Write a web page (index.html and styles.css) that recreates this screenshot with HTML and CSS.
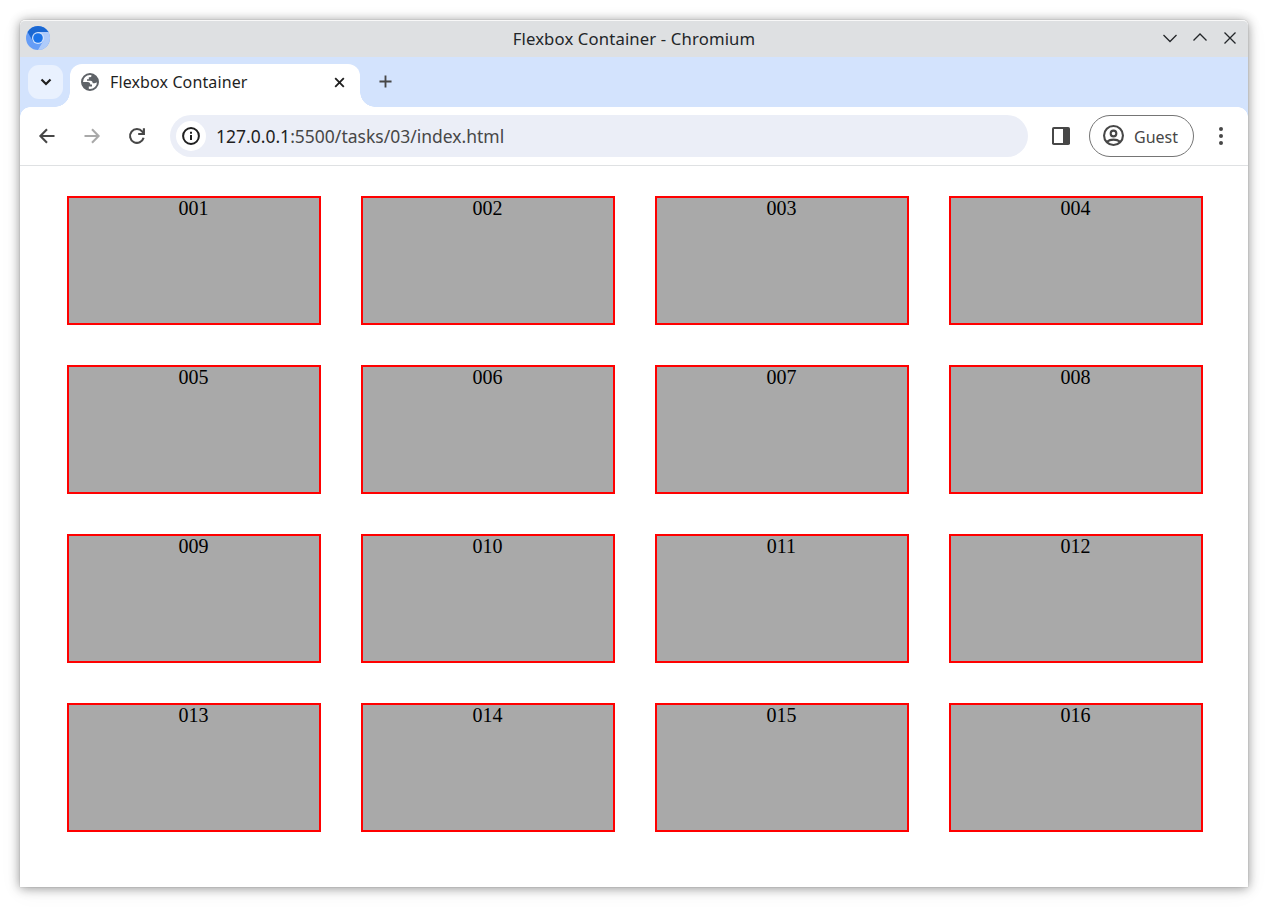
FILE: index.html
```html
<!DOCTYPE html>
<html lang="en">
<head>
<meta charset="utf-8">
<title>Flexbox Container</title>
<link rel="stylesheet" href="styles.css">
</head>
<body>
<div class="window">
  <header class="titlebar">
    <svg class="logo" viewBox="0 0 24 24">
      <circle cx="12" cy="12" r="12" fill="#669df6"/>
      <path d="M12 6H22.4A12 12 0 0 1 12 24L17.2 15Z" fill="#aecbfa"/>
      <path d="M1.6 6A12 12 0 0 1 22.4 6H12L6.8 15Z" fill="#1967d2"/>
      <circle cx="12" cy="12" r="6" fill="#d2e3fc"/>
      <circle cx="12" cy="12" r="4.8" fill="#1a73e8"/>
    </svg>
    <span class="window-title">Flexbox Container - Chromium</span>
    <div class="window-controls">
      <svg viewBox="0 0 16 16"><path d="M1.5 5L8 11.5L14.5 5"/></svg>
      <svg viewBox="0 0 16 16"><path d="M1.5 10.5L8 4L14.5 10.5"/></svg>
      <svg viewBox="0 0 16 16"><path d="M2.5 2.5L13.5 13.5M13.5 2.5L2.5 13.5"/></svg>
    </div>
  </header>
  <div class="tabstrip">
    <div class="tab-search"><svg viewBox="0 0 12 12"><path d="M1.5 3.5L6 8L10.5 3.5"/></svg></div>
    <div class="tab">
      <svg class="globe" viewBox="0 0 18 18">
        <circle cx="9" cy="9" r="8" fill="#fff" stroke="#5f6368" stroke-width="2"/>
        <path d="M1 9H6.5C8.5 9 9.3 10 9.3 11.6H11V13.4H7.8V17A8.2 8.2 0 0 1 1 9ZM10.5 1.2V2.5C10.5 4 9.6 4.3 7.8 4.3V6.2H6V7.8H9.5C11 7.8 11.7 8.8 11.7 10.2H13.5C14.5 10.2 15.2 9.5 17 9.5A8 8 0 0 0 10.5 1.2Z" fill="#5f6368"/>
      </svg>
      <span class="tab-title">Flexbox Container</span>
      <svg class="tab-close" viewBox="0 0 12 12"><path d="M1.3 1.3L10.7 10.7M10.7 1.3L1.3 10.7"/></svg>
    </div>
    <svg class="new-tab" viewBox="0 0 14 14"><path d="M7 .5V13.5M.5 7H13.5"/></svg>
  </div>
  <div class="toolbar">
    <svg class="nav" viewBox="0 0 16 16"><path d="M15.5 8H1.6M8 1.2L1.4 8L8 14.8"/></svg>
    <svg class="nav disabled" viewBox="0 0 16 16"><path d="M.5 8H14.4M8 1.2L14.6 8L8 14.8"/></svg>
    <svg class="nav" viewBox="0 0 16 16"><path d="M14.6 9.8A6.9 6.9 0 1 1 13.3 3.6L14.3 4.8M14.9 .3V6H9.2"/></svg>
    <div class="omnibox">
      <span class="site-info"><svg viewBox="0 0 18 18"><circle cx="9" cy="9" r="7.9"/><path d="M9 8V13M9 4.8V6.7"/></svg></span>
      <span class="url"><span class="host">127.0.0.1</span>:5500/tasks/03/index.html</span>
    </div>
    <svg class="side-panel" viewBox="0 0 18 18"><rect width="18" height="18" rx="1.8" fill="#474747"/><rect x="2" y="2" width="9" height="14" fill="#fff"/></svg>
    <div class="profile">
      <svg viewBox="0 0 20 20"><circle cx="10" cy="10" r="9"/><circle cx="10" cy="8.1" r="2.7"/><path d="M3.7 16C7 13.2 13 13.2 16.3 16"/></svg>
      <span>Guest</span>
    </div>
    <svg class="menu" viewBox="0 0 4 18"><circle cx="2" cy="2" r="2"/><circle cx="2" cy="9" r="2"/><circle cx="2" cy="16" r="2"/></svg>
  </div>
  <main class="container">
    <div class="item">001</div><div class="item">002</div><div class="item">003</div><div class="item">004</div>
    <div class="item">005</div><div class="item">006</div><div class="item">007</div><div class="item">008</div>
    <div class="item">009</div><div class="item">010</div><div class="item">011</div><div class="item">012</div>
    <div class="item">013</div><div class="item">014</div><div class="item">015</div><div class="item">016</div>
  </main>
</div>
</body>
</html>
```
FILE: styles.css
```css
* { box-sizing: border-box; }
body { margin: 0; padding: 20px; height: 907px; background: #fff; font-family: "Noto Sans", sans-serif; overflow: hidden; }
svg { display: block; flex: none; fill: none; overflow: visible; }
.window { width: 1228px; height: 867px; display: flex; flex-direction: column; border-radius: 5px 5px 0 0; background: #fff; box-shadow: 0 0 1px rgba(0,0,0,.4), 0 1px 11px rgba(0,0,0,.42), 0 4px 24px rgba(0,0,0,.05); }
.titlebar { height: 37px; flex: none; display: grid; grid-template-columns: 100px 1fr 100px; align-items: center; padding: 0 10px 0 6px; background: #dee0e2; border-top: 1px solid #f8f8f8; border-radius: 5px 5px 0 0; }
.logo { width: 24px; height: 24px; margin-top: -2px; }
.window-title { padding-left: 4px; text-align: center; font-size: 16.7px; letter-spacing: .14px; line-height: 24px; color: #232629; }
.window-controls { display: flex; gap: 14px; justify-content: flex-end; margin-top: -2px; }
.window-controls svg { width: 16px; height: 16px; stroke: #232629; stroke-width: 1.3; }
.tabstrip { height: 50px; flex: none; display: flex; background: #d3e3fd; padding-left: 8px; }
.tab-search { width: 35px; height: 34px; margin-top: 8px; border-radius: 11px; background: #e9f1fe; display: grid; place-items: center; }
.tab-search svg { width: 12px; height: 12px; stroke: #1f1f1f; stroke-width: 2.2; }
.tab { position: relative; width: 290px; height: 43px; margin: 7px 0 0 7px; padding: 0 15px 7px 11px; display: flex; align-items: center; background: #fff; border-radius: 12px 12px 0 0; }
.tab::before, .tab::after { content: ""; position: absolute; bottom: 0; width: 15px; height: 15px; }
.tab::before { left: -15px; background: radial-gradient(circle at 0 0, transparent 14.5px, #fff 15px); }
.tab::after { right: -15px; background: radial-gradient(circle at 100% 0, transparent 14.5px, #fff 15px); }
.globe { width: 18px; height: 18px; }
.tab-title { flex: 1; margin-left: 11px; font-size: 16px; letter-spacing: .12px; line-height: 24px; color: #1f1f1f; }
.tab-close { width: 11px; height: 11px; stroke: #1f1f1f; stroke-width: 2; }
.new-tab { width: 13px; height: 13px; margin: 18px 0 0 19px; stroke: #474747; stroke-width: 2; }
.toolbar { position: relative; height: 59px; flex: none; display: flex; align-items: center; padding: 0 25px 1px 19.4px; background: #fff; border-bottom: 1px solid #dfe1e3; }
.toolbar::before, .toolbar::after { content: ""; position: absolute; top: 0; width: 10px; height: 10px; }
.toolbar::before { left: 0; background: radial-gradient(circle at 100% 100%, transparent 9.5px, #d3e3fd 10px); }
.toolbar::after { right: 0; background: radial-gradient(circle at 0 100%, transparent 9.5px, #d3e3fd 10px); }
.nav { width: 16px; height: 16px; margin-right: 29px; stroke: #474747; stroke-width: 2.1; }
.disabled { stroke: #a9a9a9; }
.omnibox { width: 858px; height: 42px; margin-left: -4.4px; padding-left: 6px; display: flex; align-items: center; border-radius: 21px; background: #ebeef7; }
.site-info { width: 30px; height: 30px; border-radius: 50%; background: #fff; display: grid; place-items: center; }
.site-info svg { width: 18px; height: 18px; stroke: #1f1f1f; stroke-width: 2; }
.url { margin-left: 10px; font-size: 17.5px; line-height: 26px; color: #474747; white-space: nowrap; }
.host { color: #1f1f1f; }
.side-panel { width: 18px; height: 18px; margin-left: 24px; }
.profile { width: 104.5px; height: 42px; margin-left: 19px; padding-left: 13px; display: flex; align-items: center; gap: 10px; border: 1px solid #757575; border-radius: 21px; font-size: 16px; line-height: 24px; color: #474747; }
.profile span { padding-top: 2px; }
.profile svg { width: 21px; height: 21px; stroke: #474747; stroke-width: 2; }
.menu { width: 4px; height: 18px; margin-left: 25.5px; fill: #474747; }
.container { flex: 1; display: flex; flex-wrap: wrap; align-content: flex-start; gap: 40px; padding: 30px 45px 0 47px; font-family: "Liberation Serif", serif; }
.item { width: 254px; height: 129px; padding-right: 1px; border: 2px solid #f00; background: #a9a9a9; color: #000; font-size: 20px; line-height: 20px; text-align: center; }
```
